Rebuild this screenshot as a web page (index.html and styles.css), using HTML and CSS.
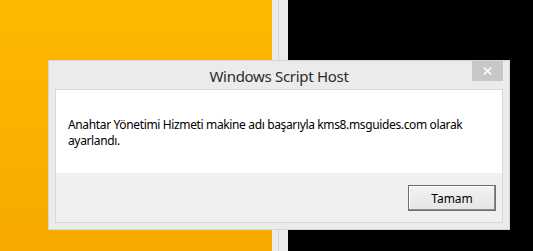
FILE: index.html
```html
<!DOCTYPE html>
<html lang="tr">
<head>
    <meta charset="UTF-8">
    <meta name="viewport" content="width=device-width, initial-scale=1.0">
    <title>Windows Script Host</title>
    <link rel="stylesheet" href="styles.css">
</head>
<body>
    <div class="desktop">
        <div class="wallpaper"></div>
        <div class="divider"></div>
        <div class="dark"></div>

        <div class="msgbox">
            <div class="titlebar">
                <span class="title">Windows Script Host</span>
                <button class="close" aria-label="Kapat">
                    <svg width="9" height="8" viewBox="0 0 9 8">
                        <path d="M0.8 0.5 L8.2 7.5 M8.2 0.5 L0.8 7.5" stroke="#fff" stroke-width="1.6" fill="none"/>
                    </svg>
                </button>
            </div>
            <div class="client">
                <div class="message">
                    <p>Anahtar Yönetimi Hizmeti makine adı başarıyla kms8.msguides.com olarak<br>ayarlandı.</p>
                </div>
                <div class="footer">
                    <button class="ok">Tamam</button>
                </div>
            </div>
        </div>
    </div>
</body>
</html>
```

FILE: styles.css
```css
body {
    margin: 0;
    background-color: #000;
    overflow: hidden;
    font-family: "Noto Sans", "Open Sans", sans-serif;
}

.desktop {
    display: flex;
    height: 251px;
    position: relative;
}

.wallpaper {
    width: 272px;
    background: linear-gradient(to bottom, #fdb900, #f7a900);
}

.divider {
    width: 16px;
    background: linear-gradient(to right, #ebebeb 6px, #d4d4d4 6px, #d4d4d4 7px, #ebebeb 7px);
}

.dark {
    flex: 1;
    background-color: #000;
}

.msgbox {
    position: absolute;
    left: 48px;
    top: 60px;
    width: 462px;
    height: 170px;
    box-sizing: border-box;
    background-color: #ebebeb;
    border: 1px solid #d6d6d6;
    padding: 0 6px 6px;
    display: flex;
    flex-direction: column;
}

.titlebar {
    height: 28px;
    position: relative;
    display: flex;
    align-items: center;
    justify-content: center;
}

.title {
    font-size: 15px;
    letter-spacing: -0.3px;
    color: #2b2b2b;
    margin-top: 2px;
}

.close {
    position: absolute;
    top: 0;
    right: 0;
    width: 31px;
    height: 20px;
    padding: 0;
    border: none;
    background-color: #c7c7c7;
    display: flex;
    align-items: center;
    justify-content: center;
}

.client {
    flex: 1;
    display: flex;
    flex-direction: column;
    border: 1px solid #d9d9d9;
    background-color: #f0f0f0;
}

.message {
    height: 83px;
    box-sizing: border-box;
    background-color: #fff;
    padding: 27px 12px 0;
}

.message p {
    margin: 0;
    font-size: 12px;
    line-height: 16px;
    letter-spacing: -0.36px;
    color: #000;
}

.footer {
    flex: 1;
    display: flex;
    justify-content: flex-end;
    align-items: flex-start;
    padding: 12px 6px 0 0;
}

.ok {
    width: 88px;
    height: 26px;
    box-sizing: border-box;
    border: 1px solid #6e6e6e;
    background: linear-gradient(to bottom, #f2f2f2, #e6e6e6);
    box-shadow: inset -1px -1px 0 #8c8c8c, inset 1px 1px 0 #fff;
    font-family: "Noto Sans", "Open Sans", sans-serif;
    font-size: 12px;
    color: #000;
    padding: 0;
}
```
